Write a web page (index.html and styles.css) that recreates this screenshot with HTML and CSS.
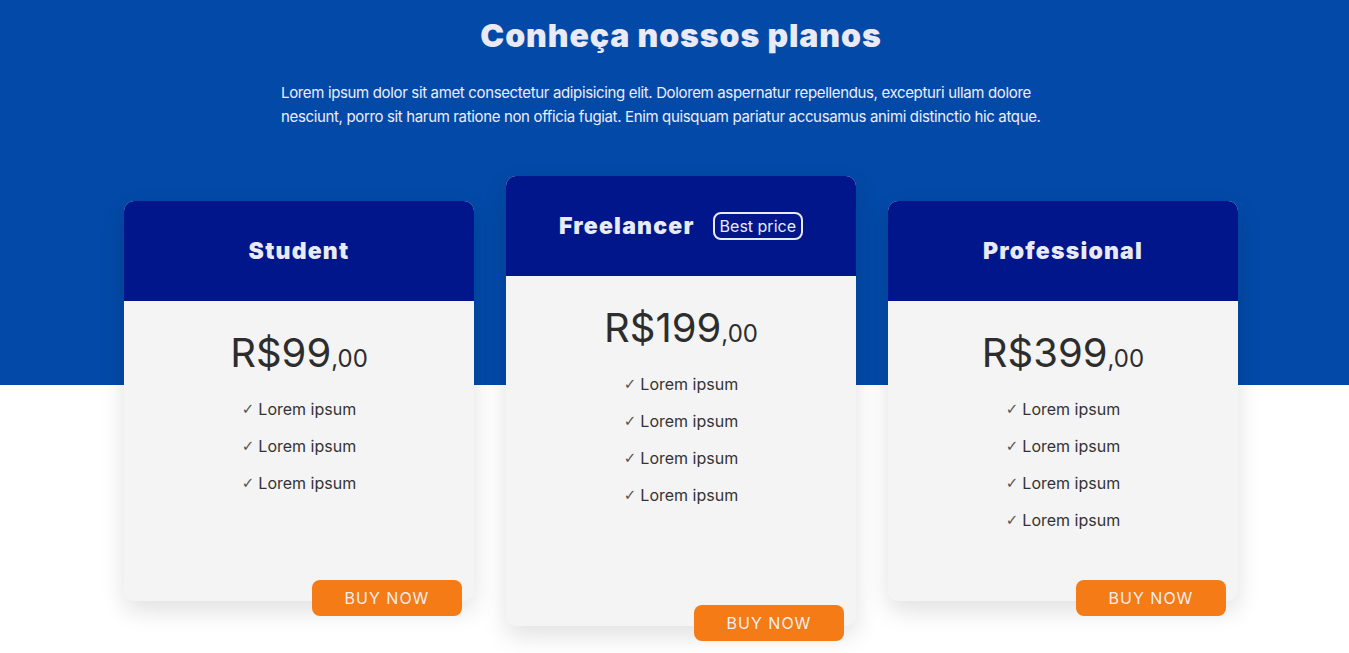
FILE: index.html
```html
<!DOCTYPE html>
<html lang="pt-BR">
<head>
<meta charset="utf-8">
<title>Planos</title>
<link rel="stylesheet" href="styles.css">
</head>
<body>
<main class="page">
  <section class="intro">
    <h1 class="title">Conheça nossos planos</h1>
    <p class="lead">Lorem ipsum dolor sit amet consectetur adipisicing elit. Dolorem aspernatur repellendus, excepturi ullam dolore nesciunt, porro sit harum ratione non officia fugiat. Enim quisquam pariatur accusamus animi distinctio hic atque.</p>
  </section>
  <section class="plans">
    <article class="card card-side">
      <header class="card-head"><h2 class="card-name">Student</h2></header>
      <div class="card-body">
        <p class="price">R$99<span class="cents">,00</span></p>
        <ul class="features">
          <li><span class="check">✓</span>Lorem ipsum</li>
          <li><span class="check">✓</span>Lorem ipsum</li>
          <li><span class="check">✓</span>Lorem ipsum</li>
        </ul>
      </div>
      <a class="buy" href="#">BUY NOW</a>
    </article>
    <article class="card card-main">
      <header class="card-head"><h2 class="card-name">Freelancer</h2><span class="badge">Best price</span></header>
      <div class="card-body">
        <p class="price">R$199<span class="cents">,00</span></p>
        <ul class="features">
          <li><span class="check">✓</span>Lorem ipsum</li>
          <li><span class="check">✓</span>Lorem ipsum</li>
          <li><span class="check">✓</span>Lorem ipsum</li>
          <li><span class="check">✓</span>Lorem ipsum</li>
        </ul>
      </div>
      <a class="buy" href="#">BUY NOW</a>
    </article>
    <article class="card card-side">
      <header class="card-head"><h2 class="card-name">Professional</h2></header>
      <div class="card-body">
        <p class="price">R$399<span class="cents">,00</span></p>
        <ul class="features">
          <li><span class="check">✓</span>Lorem ipsum</li>
          <li><span class="check">✓</span>Lorem ipsum</li>
          <li><span class="check">✓</span>Lorem ipsum</li>
          <li><span class="check">✓</span>Lorem ipsum</li>
        </ul>
      </div>
      <a class="buy" href="#">BUY NOW</a>
    </article>
  </section>
</main>
</body>
</html>
```
FILE: styles.css
```css
* { box-sizing: border-box; }
html, body { margin: 0; padding: 0; }
body {
  font-family: Inter, "Noto Sans", sans-serif;
  background: #ffffff;
  color: #333;
  overflow: hidden;
}
.page {
  padding-left: 13px;
  background: linear-gradient(#0349a7 0, #0349a7 385px, #ffffff 385px);
  min-height: 653px;
}
.intro {
  display: flex;
  flex-direction: column;
  align-items: center;
  padding-top: 14px;
}
.title {
  margin: 0;
  font-family: Inter, sans-serif;
  font-weight: 900;
  font-size: 32px;
  line-height: 44px;
  color: #e9eaf5;
  letter-spacing: 0.9px;
}
.lead {
  width: 800px;
  margin: 23px 0 0;
  font-size: 15px;
  line-height: 24px;
  color: #eceef7;
  letter-spacing: -0.35px;
}
.plans {
  display: flex;
  justify-content: center;
  align-items: flex-start;
  gap: 32px;
  margin-top: 47px;
}
.card {
  position: relative;
  width: 350px;
  height: 400px;
  border-radius: 10px;
  background: #f4f4f4;
  box-shadow: 0 10px 24px rgba(0, 0, 0, 0.12);
  display: flex;
  flex-direction: column;
}
.card-side { margin-top: 25px; }
.card-main { height: 450px; }
.card-head {
  height: 100px;
  flex: none;
  background: #00168a;
  border-radius: 10px 10px 0 0;
  display: flex;
  align-items: center;
  justify-content: center;
  gap: 18px;
}
.card-name {
  margin: 0;
  font-family: Inter, sans-serif;
  font-weight: 900;
  font-size: 23px;
  color: #e9eaf5;
  letter-spacing: 1.2px;
}
.badge {
  border: 2px solid #e9eaf5;
  border-radius: 8px;
  padding: 1px 5px;
  font-size: 16px;
  line-height: 22px;
  color: #e9eaf5;
}
.card-body {
  display: flex;
  flex-direction: column;
  align-items: center;
  padding-top: 24px;
}
.price {
  margin: 0;
  font-size: 40px;
  line-height: 56px;
  color: #2d2d2d;
  font-weight: 400;
}
.cents { font-size: 24px; }
.features {
  list-style: none;
  margin: 12px 0 0;
  padding: 0;
  display: flex;
  flex-direction: column;
  gap: 17px;
}
.features li {
  font-size: 16px;
  line-height: 20px;
  height: 20px;
  color: #333;
  display: flex;
  align-items: center;
}
.check {
  font-family: "DejaVu Sans", sans-serif;
  font-size: 15px;
  line-height: 1;
  margin-right: 4px;
  color: #555;
}
.buy {
  position: absolute;
  right: 12px;
  bottom: -15px;
  width: 150px;
  height: 36px;
  border-radius: 8px;
  background: #f47b16;
  color: #f2eef0;
  text-decoration: none;
  display: flex;
  align-items: center;
  justify-content: center;
  font-size: 16px;
  letter-spacing: 1px;
}
```
